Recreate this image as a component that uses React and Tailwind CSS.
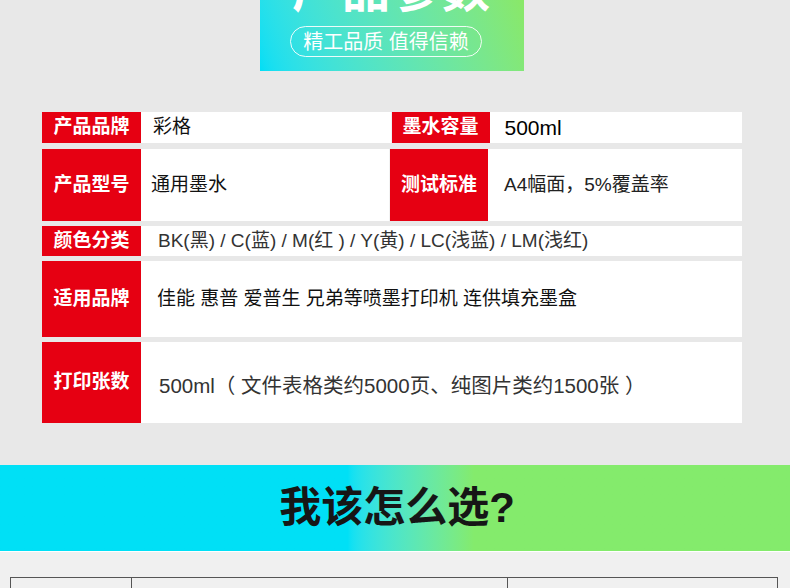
const font = { fontFamily: '"Liberation Sans", "Noto Sans CJK SC", sans-serif' };

function Label({ children, className = '' }) {
  return (
    <div className={`w-[99px] shrink-0 bg-[#e60012] text-white text-[19px] font-bold flex items-center justify-center ${className}`}>
      {children}
    </div>
  );
}

function Value({ children, className = '' }) {
  return (
    <div className={`flex-1 bg-white flex items-center text-[19px] ${className}`}>
      {children}
    </div>
  );
}

export default function App() {
  return (
    <div className="w-[790px] h-[588px] overflow-hidden bg-[#e8e8e8]" style={font}>
      {/* 顶部标题 */}
      <div className="ml-[260px] w-[264px] h-[71px] overflow-hidden bg-linear-70 from-[#00def6] to-[#8ae867] flex flex-col items-center">
        <div className="mt-[-33px] h-[48px] leading-[48px] text-[48px] font-bold text-white tracking-[2px] whitespace-nowrap">
          产品参数
        </div>
        <div className="mt-[11px] mr-[12px] w-[192px] h-[31px] rounded-full border border-white/90 text-white text-[20px] leading-none flex items-center justify-center whitespace-nowrap">
          精工品质 值得信赖
        </div>
      </div>

      {/* 参数表 */}
      <div className="ml-[42px] w-[700px] mt-[41px] flex flex-col">
        <div className="h-[31px] flex">
          <Label>产品品牌</Label>
          <Value className="pl-[12px] text-[#111]">彩格</Value>
          <Label className="border-l border-[#f2f2f2]">墨水容量</Label>
          <Value className="pl-[15px] text-[21px] text-black">500ml</Value>
        </div>
        <div className="h-[72px] mt-[6px] flex">
          <Label>产品型号</Label>
          <Value className="pl-[10px] text-[#111]">通用墨水</Value>
          <Label className="border-l border-[#f2f2f2]">测试标准</Label>
          <Value className="pl-[16px] text-[#222] text-[19.5px]">A4幅面，5%覆盖率</Value>
        </div>
        <div className="h-[30px] mt-[5px] flex">
          <Label>颜色分类</Label>
          <Value className="pl-[17px] text-[#333] whitespace-nowrap">BK(黑) / C(蓝) / M(红 ) / Y(黄) / LC(浅蓝) / LM(浅红)</Value>
        </div>
        <div className="h-[76px] mt-[5px] flex">
          <Label>适用品牌</Label>
          <Value className="pl-[16px] text-[#111] whitespace-nowrap">佳能 惠普 爱普生 兄弟等喷墨打印机 连供填充墨盒</Value>
        </div>
        <div className="h-[81px] mt-[5px] flex">
          <Label>打印张数</Label>
          <Value className="pl-[18px] pt-[8px] text-[#333] text-[20.5px] whitespace-nowrap">500ml（ 文件表格类约5000页、纯图片类约1500张 ）</Value>
        </div>
      </div>

      {/* 我该怎么选 */}
      <div className="mt-[42px] h-[86px] bg-gradient-to-r from-[#00e0f6] from-[44%] to-[#84eb6c] to-[60%] flex items-center justify-center">
        <span className="text-[42px] font-bold text-[#161616] leading-none ml-[4px]">我该怎么选?</span>
      </div>
      <div className="h-[1px] bg-white" />
      <div className="bg-[#f0f0f0] pt-[25px] h-[60px]">
        <div className="ml-[10px] w-[768px] h-[40px] border border-[#555] flex">
          <div className="w-[121px] border-r border-[#555]" />
          <div className="w-[376px] border-r border-[#555]" />
          <div className="flex-1" />
        </div>
      </div>
    </div>
  );
}
